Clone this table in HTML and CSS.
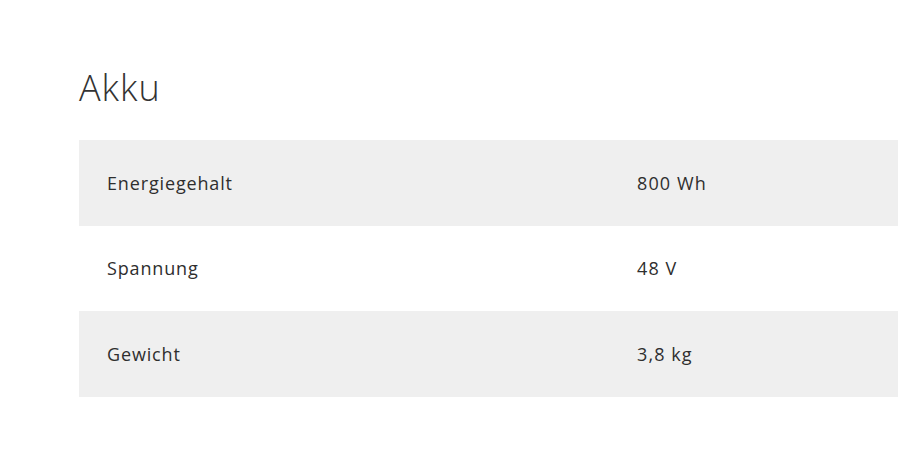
FILE: index.html
```html
<!DOCTYPE html>
<html lang="de">
<head>
<meta charset="utf-8">
<title>Akku</title>
<link rel="stylesheet" href="styles.css">
</head>
<body>
<section class="specs">
  <h2 class="specs-title">Akku</h2>
  <div class="spec-table">
    <div class="spec-row shaded">
      <div class="spec-label">Energiegehalt</div>
      <div class="spec-value">800 Wh</div>
    </div>
    <div class="spec-row">
      <div class="spec-label">Spannung</div>
      <div class="spec-value">48 V</div>
    </div>
    <div class="spec-row shaded">
      <div class="spec-label">Gewicht</div>
      <div class="spec-value">3,8 kg</div>
    </div>
  </div>
</section>
</body>
</html>
```
FILE: styles.css
```css
html, body {
  margin: 0;
  padding: 0;
  background: #ffffff;
}
body {
  font-family: "Open Sans", "Liberation Sans", sans-serif;
  color: #333333;
}
.specs {
  padding: 64px 2px 0 79px;
}
.specs-title {
  margin: 0 0 28px 0;
  font-size: 36px;
  font-weight: 300;
  line-height: 48px;
  letter-spacing: 1px;
  color: #333333;
}
.spec-table {
  display: flex;
  flex-direction: column;
}
.spec-row {
  display: grid;
  grid-template-columns: 558px 1fr;
  align-items: center;
  height: 85.5px;
  font-size: 18px;
  font-weight: 500;
  letter-spacing: 0.85px;
  color: #2e2e2e;
}
.spec-row.shaded {
  background: #efefef;
}
.spec-label {
  padding-left: 28px;
}
.spec-value {
  letter-spacing: 1.1px;
}
```
